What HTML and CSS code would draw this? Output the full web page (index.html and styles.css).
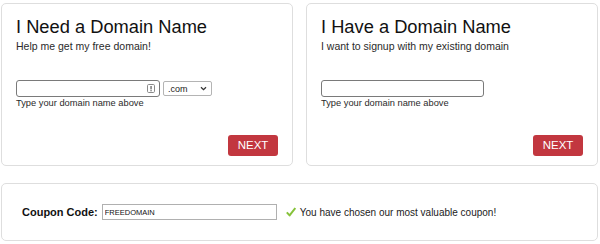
FILE: index.html
```html
<!DOCTYPE html>
<html lang="en">
<head>
<meta charset="utf-8">
<title>Domain</title>
<link rel="stylesheet" href="styles.css">
</head>
<body>
<div class="page">
  <div class="row">
    <div class="card">
      <h1 class="title">I Need a Domain Name</h1>
      <p class="sub">Help me get my free domain!</p>
      <div class="fields">
        <span class="inwrap">
          <input class="domain domain-new" type="text">
          <svg class="pwicon" width="8" height="9" viewBox="0 0 8 9"><rect x="0.5" y="0.5" width="7" height="8" rx="1.2" fill="#fff" stroke="#8a8a8a"/><rect x="3.4" y="2" width="1.3" height="3.4" fill="#666"/><rect x="3.4" y="6.1" width="1.3" height="1.2" fill="#666"/></svg>
        </span>
        <div class="select"><span>.com</span><svg width="7" height="5" viewBox="0 0 7 5"><path d="M1 1.2 L3.5 3.6 L6 1.2" fill="none" stroke="#333" stroke-width="1.3"/></svg></div>
      </div>
      <p class="hint">Type your domain name above</p>
      <div class="actions"><button class="next">NEXT</button></div>
    </div>
    <div class="card">
      <h1 class="title">I Have a Domain Name</h1>
      <p class="sub">I want to signup with my existing domain</p>
      <div class="fields">
        <input class="domain domain-have" type="text">
      </div>
      <p class="hint">Type your domain name above</p>
      <div class="actions"><button class="next">NEXT</button></div>
    </div>
  </div>
  <div class="coupon">
    <label class="clabel">Coupon Code:</label>
    <input class="cinput" type="text" value="FREEDOMAIN">
    <svg class="check" width="10" height="10" viewBox="0 0 10 10"><path d="M0.8 5.4 L3.6 8.4 L9.3 1" fill="none" stroke="#86c23a" stroke-width="2" stroke-linejoin="round"/></svg>
    <span class="cmsg">You have chosen our most valuable coupon!</span>
  </div>
</div>
</body>
</html>
```
FILE: styles.css
```css
* { box-sizing: border-box; }
html, body { margin: 0; padding: 0; background: #fff; }
body { font-family: "Liberation Sans", Arial, sans-serif; color: #222; }
.page { width: 597px; margin: 3px 0 0 1px; }
.row { display: flex; justify-content: space-between; }
.card {
  width: 292px; height: 163px;
  border: 1px solid #dedede; border-radius: 5px;
  padding: 12px 14px 9px 14px;
  display: flex; flex-direction: column;
}
.title { margin: 0; font-size: 18.3px; line-height: 21px; font-weight: normal; color: #111; }
.sub { margin: 3px 0 0 0; font-size: 10.5px; line-height: 13px; color: #2a2a2a; }
.fields { margin-top: 27px; display: flex; align-items: center; gap: 3px; }
.inwrap { position: relative; display: block; }
.domain {
  display: block; height: 17px; margin: 0; padding: 0 2px;
  border: 1px solid #7a7a7a; border-radius: 3px; background: #fff;
  font-family: inherit; font-size: 9px;
}
.domain-new { width: 144px; }
.domain-have { width: 163px; }
.pwicon { position: absolute; left: 131px; top: 4px; }
.select {
  width: 49px; height: 15px; border: 1px solid #b4b4b4; border-radius: 2px;
  display: flex; align-items: center; justify-content: space-between;
  padding: 0 4px 0 4px; font-size: 9px; color: #222; background: #fff;
}
.hint { margin: 1px 0 0 0; font-size: 9.3px; line-height: 11px; color: #2a2a2a; }
.actions { margin-top: auto; display: flex; justify-content: flex-end; }
.next {
  width: 50px; height: 21px; margin: 0; padding: 0;
  border: 0; border-radius: 3px; background: #c2373f; color: #fff;
  font-family: inherit; font-size: 11.5px; line-height: 21px;
}
.coupon {
  margin-top: 17px; height: 58px;
  border: 1px solid #dedede; border-radius: 5px;
  display: flex; align-items: center; padding: 0 0 0 20px;
}
.clabel { font-size: 11px; font-weight: bold; color: #111; }
.cinput {
  margin: 0 0 0 4px; width: 175px; height: 16px; padding: 0 2px;
  border: 1px solid #b0b0b0; border-radius: 0; background: #fff;
  font-family: inherit; font-size: 7.5px; color: #111;
}
.check { margin-left: 9px; }
.cmsg { margin-left: 4px; font-size: 10px; color: #222; }
```
